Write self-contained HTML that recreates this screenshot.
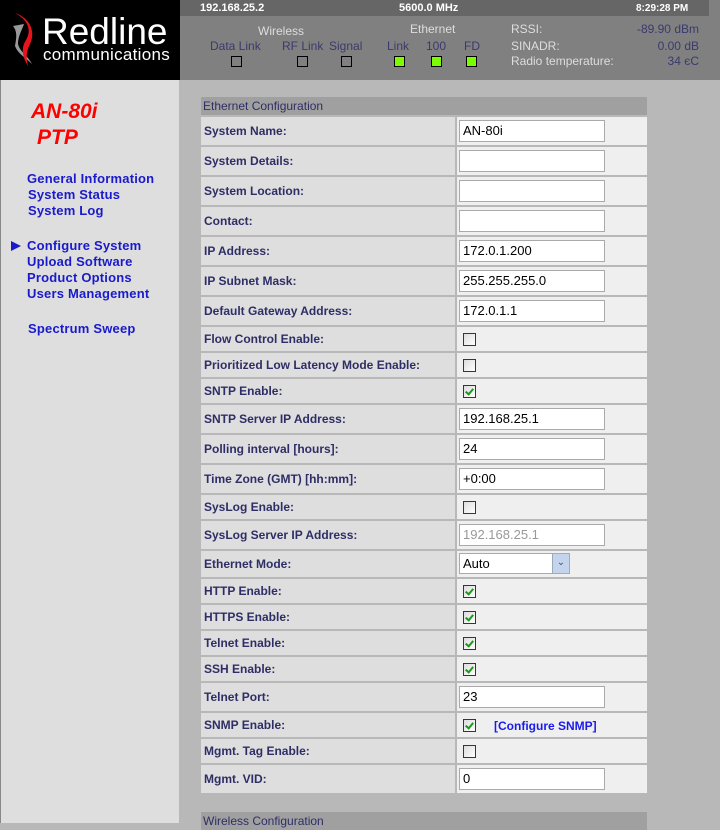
<!DOCTYPE html>
<html><head><meta charset="utf-8"><style>
*{margin:0;padding:0;box-sizing:border-box}
body{width:720px;height:823px;overflow:hidden;background:#b8b8b8;font-family:"Liberation Sans",Arial,sans-serif;position:relative}
.a{position:absolute}
#logo{left:0;top:0;width:180px;height:80px;background:#000}
#hdr{left:180px;top:0;width:540px;height:80px;background:#808080}
#top{left:180px;top:0;width:529px;height:16px;background:#666;color:#fff;font-size:11px;font-weight:bold}
.hl{color:#ddd;font-size:12px}
.nv{color:#3a3a6e;font-size:12px}
.led{width:11px;height:11px;border:1px solid #000}
#side{left:0;top:80px;width:179px;height:743px;background:#dedede;border-left:1px solid #888}
.nav{position:absolute;left:26px;color:#1a1acc;font-weight:bold;font-size:13px;letter-spacing:.2px}
.row{position:absolute;left:201px;width:446px;height:28px}
.lab{position:absolute;left:0;top:0;width:254px;height:100%;background:#dedede;color:#2e2e66;font-weight:bold;font-size:12px;padding-left:3px;display:flex;align-items:center}
.val{position:absolute;left:256px;top:0;width:190px;height:100%;background:#efefef}
.inp{position:absolute;left:2px;top:3px;width:146px;height:22px;background:#fff;border:1px solid #aaa;font-size:13px;padding:2px 0 0 3px;color:#000}
.cb{position:absolute;left:6px;width:13px;height:13px;border:1px solid #1c3c5c;background:linear-gradient(135deg,#dcdcdc,#fff)}
.cb.k::after{content:"";position:absolute;left:3px;top:1px;width:3px;height:6px;border:solid #1a9a1a;border-width:0 2px 2px 0;transform:rotate(40deg)}
.sec{position:absolute;left:201px;width:446px;height:18px;background:#a0a0a0;color:#2e2e66;font-size:12px;padding:2px 0 0 2px}
</style></head><body>
<div id="logo" class="a">
<svg width="180" height="80" style="position:absolute;left:0;top:0">
<path d="M13 26 C18 32 16 40 15 46 C18 54 26 58 32 64 C28 56 20 52 18 44 C18 36 22 30 24 24 Z" fill="#999"/>
<path d="M15 13 C28 20 32 30 26 40 C21 48 22 56 28 66 C26 58 26 52 30 44 C36 32 30 18 15 13 Z" fill="#e8141c"/>
</svg>
<div class="a" style="left:42px;top:12px;color:#fff;font-size:37px;line-height:40px">Redline</div>
<div class="a" style="left:43px;top:45px;color:#fff;font-size:17px;letter-spacing:.3px">communications</div>
</div>
<div id="hdr" class="a"></div>
<div id="top" class="a"><span class="a" style="left:20px;top:2px">192.168.25.2</span><span class="a" style="left:219px;top:2px">5600.0 MHz</span><span class="a" style="left:456px;top:3px;font-size:10px">8:29:28 PM</span></div>
<div class="a hl" style="left:258px;top:24px">Wireless</div>
<div class="a nv" style="left:210px;top:39px">Data Link</div>
<div class="a nv" style="left:282px;top:39px">RF Link</div>
<div class="a nv" style="left:329px;top:39px">Signal</div>
<div class="a led" style="left:231px;top:56px"></div>
<div class="a led" style="left:297px;top:56px"></div>
<div class="a led" style="left:341px;top:56px"></div>
<div class="a hl" style="left:410px;top:22px">Ethernet</div>
<div class="a nv" style="left:387px;top:39px">Link</div>
<div class="a nv" style="left:426px;top:39px">100</div>
<div class="a nv" style="left:464px;top:39px">FD</div>
<div class="a led" style="left:394px;top:56px;background:#7cfc00"></div>
<div class="a led" style="left:431px;top:56px;background:#7cfc00"></div>
<div class="a led" style="left:466px;top:56px;background:#7cfc00"></div>
<div class="a hl" style="left:511px;top:22px">RSSI:</div>
<div class="a hl" style="left:511px;top:39px">SINADR:</div>
<div class="a hl" style="left:511px;top:54px">Radio temperature:</div>
<div class="a nv" style="right:21px;top:22px">-89.90 dBm</div>
<div class="a nv" style="right:21px;top:39px">0.00 dB</div>
<div class="a nv" style="right:21px;top:54px">34 єC</div>
<div id="side" class="a">
<div class="a" style="left:30px;top:20px;color:#f00;font-size:21px;font-weight:bold;font-style:italic">AN-80i</div>
<div class="a" style="left:36px;top:46px;color:#f00;font-size:21px;font-weight:bold;font-style:italic">PTP</div>
<div class="nav" style="top:91px">General Information</div>
<div class="nav" style="top:107px;left:27px">System Status</div>
<div class="nav" style="top:123px;left:27px">System Log</div>
<div class="a" style="left:10px;top:161px;width:0;height:0;border-left:10px solid #1a1acc;border-top:5px solid transparent;border-bottom:5px solid transparent"></div>
<div class="nav" style="top:158px">Configure System</div>
<div class="nav" style="top:174px">Upload Software</div>
<div class="nav" style="top:190px">Product Options</div>
<div class="nav" style="top:206px">Users Management</div>
<div class="nav" style="top:241px;left:27px">Spectrum Sweep</div>
</div>
<div class="sec" style="top:97px">Ethernet Configuration</div>

<div class="row" style="top:117px"><div class="lab">System Name:</div><div class="val"><div class="inp">AN-80i</div></div></div>
<div class="row" style="top:147px"><div class="lab">System Details:</div><div class="val"><div class="inp"></div></div></div>
<div class="row" style="top:177px"><div class="lab">System Location:</div><div class="val"><div class="inp"></div></div></div>
<div class="row" style="top:207px"><div class="lab">Contact:</div><div class="val"><div class="inp"></div></div></div>
<div class="row" style="top:237px"><div class="lab">IP Address:</div><div class="val"><div class="inp">172.0.1.200</div></div></div>
<div class="row" style="top:267px"><div class="lab">IP Subnet Mask:</div><div class="val"><div class="inp">255.255.255.0</div></div></div>
<div class="row" style="top:297px"><div class="lab">Default Gateway Address:</div><div class="val"><div class="inp">172.0.1.1</div></div></div>
<div class="row" style="top:327px;height:24px"><div class="lab">Flow Control Enable:</div><div class="val"><div class="cb" style="top:6px"></div></div></div>
<div class="row" style="top:353px;height:24px"><div class="lab">Prioritized Low Latency Mode Enable:</div><div class="val"><div class="cb" style="top:6px"></div></div></div>
<div class="row" style="top:379px;height:24px"><div class="lab">SNTP Enable:</div><div class="val"><div class="cb k" style="top:6px"></div></div></div>
<div class="row" style="top:405px"><div class="lab">SNTP Server IP Address:</div><div class="val"><div class="inp">192.168.25.1</div></div></div>
<div class="row" style="top:435px"><div class="lab">Polling interval [hours]:</div><div class="val"><div class="inp">24</div></div></div>
<div class="row" style="top:465px"><div class="lab">Time Zone (GMT) [hh:mm]:</div><div class="val"><div class="inp">+0:00</div></div></div>
<div class="row" style="top:495px;height:24px"><div class="lab">SysLog Enable:</div><div class="val"><div class="cb" style="top:6px"></div></div></div>
<div class="row" style="top:521px"><div class="lab">SysLog Server IP Address:</div><div class="val"><div class="inp" style="color:#999">192.168.25.1</div></div></div>
<div class="row" style="top:551px;height:26px"><div class="lab">Ethernet Mode:</div><div class="val"><div class="inp" style="width:111px;height:21px;top:2px">Auto<div style="position:absolute;right:0;top:0;width:17px;height:19px;background:#c4d4ec;border-left:1px solid #9ab;color:#456;font-size:10px;text-align:center;line-height:18px">&#8964;</div></div></div></div>
<div class="row" style="top:579px;height:24px"><div class="lab">HTTP Enable:</div><div class="val"><div class="cb k" style="top:6px"></div></div></div>
<div class="row" style="top:605px;height:24px"><div class="lab">HTTPS Enable:</div><div class="val"><div class="cb k" style="top:6px"></div></div></div>
<div class="row" style="top:631px;height:24px"><div class="lab">Telnet Enable:</div><div class="val"><div class="cb k" style="top:6px"></div></div></div>
<div class="row" style="top:657px;height:24px"><div class="lab">SSH Enable:</div><div class="val"><div class="cb k" style="top:6px"></div></div></div>
<div class="row" style="top:683px"><div class="lab">Telnet Port:</div><div class="val"><div class="inp">23</div></div></div>
<div class="row" style="top:713px;height:24px"><div class="lab">SNMP Enable:</div><div class="val"><div class="cb k" style="top:6px"></div><span class="a" style="left:37px;top:6px;color:#1a1aee;font-size:12px;font-weight:bold">[Configure SNMP]</span></div></div>
<div class="row" style="top:739px;height:24px"><div class="lab">Mgmt. Tag Enable:</div><div class="val"><div class="cb" style="top:6px"></div></div></div>
<div class="row" style="top:765px"><div class="lab">Mgmt. VID:</div><div class="val"><div class="inp">0</div></div></div>

<div class="sec" style="top:812px">Wireless Configuration</div>
</body></html>
